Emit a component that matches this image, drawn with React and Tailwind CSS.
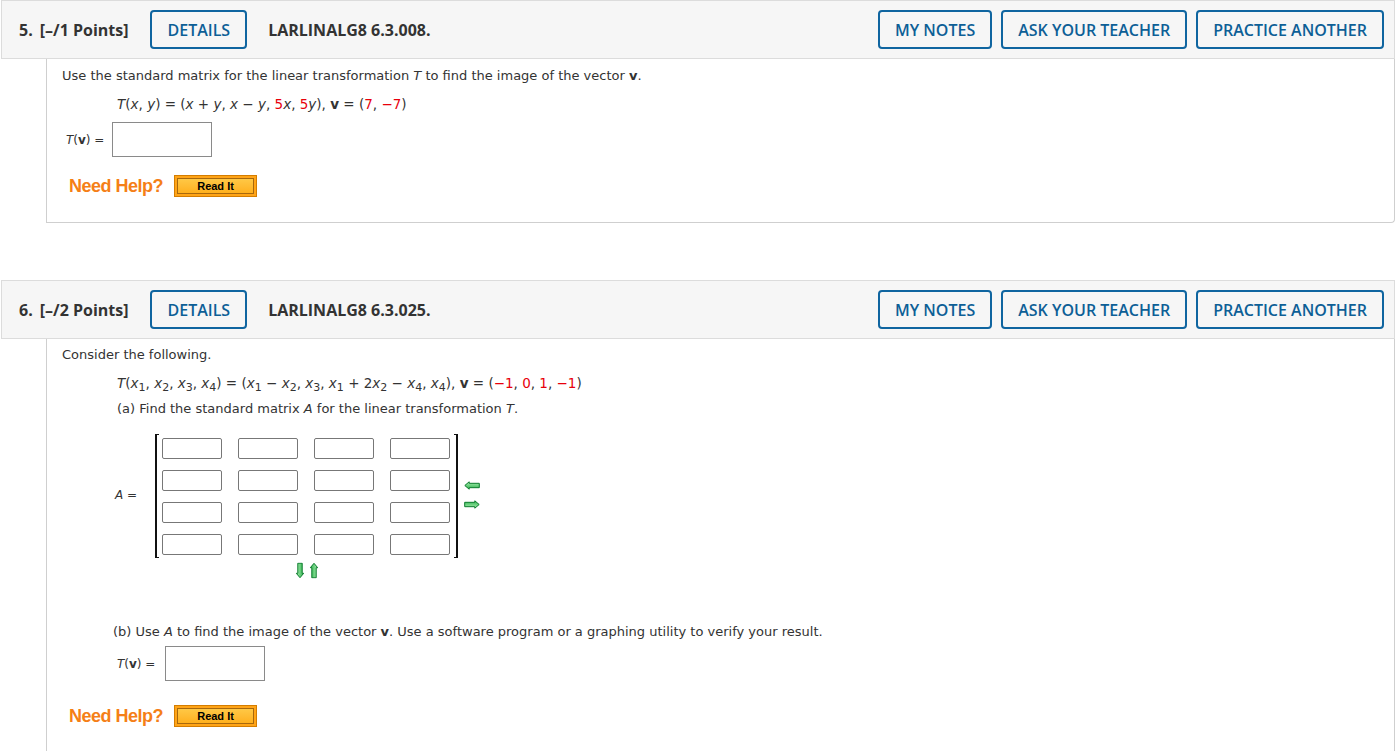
import React from 'react';

const hdrFont = { fontFamily: '"Open Sans", "Liberation Sans", sans-serif' };

const HeaderBtn = ({ children }) => (
  <button className="h-[39px] px-[15px] rounded-[4px] border-2 border-[#0f65a0] bg-white/0 text-[#0d5f96] text-[16px] font-semibold leading-none">
    {children}
  </button>
);

const QuestionHeader = ({ num, points, code }) => (
  <div
    className="h-[59px] mx-[1px] border border-[#dcdcdc] bg-[#f6f6f6] flex items-center pl-[17px] pr-[10px] text-[16px] text-[#333]"
    style={hdrFont}
  >
    <span className="font-bold">{num}.</span>
    <span className="font-bold ml-[7px]">[–/{points} Points]</span>
    <div className="ml-[22px]">
      <HeaderBtn>DETAILS</HeaderBtn>
    </div>
    <span className="font-bold ml-[21px]">{code}</span>
    <div className="ml-auto flex gap-[9px]">
      <HeaderBtn>MY NOTES</HeaderBtn>
      <HeaderBtn>ASK YOUR TEACHER</HeaderBtn>
      <HeaderBtn>PRACTICE ANOTHER</HeaderBtn>
    </div>
  </div>
);

const Red = ({ children }) => <span className="text-[#e8000b]">{children}</span>;

const Box = ({ className = '' }) => (
  <div className={'w-[100px] h-[35px] border border-[#8a8a8a] bg-white ' + className}></div>
);

const NeedHelp = () => (
  <div className="flex items-center">
    <span
      className="text-[18px] font-bold text-[#f57f17] tracking-[-0.5px]"
      style={{ fontFamily: '"Liberation Sans", Arial, sans-serif' }}
    >
      Need Help?
    </span>
    <div className="ml-[11px] w-[83px] h-[22px] bg-[#ffa417] border border-[#d47d00] p-[2px]">
      <div
        className="h-full border border-[#a8680c] bg-gradient-to-b from-[#ffc845] to-[#ffb01c] flex items-center justify-center text-[11px] font-bold text-black"
        style={{ fontFamily: '"Liberation Sans", Arial, sans-serif' }}
      >
        Read It
      </div>
    </div>
  </div>
);

const GreenArrow = ({ className = '' }) => (
  <svg width="16" height="9" viewBox="0 0 16 9" className={className}>
    <defs>
      <linearGradient id="ga" x1="0" y1="0" x2="0" y2="1">
        <stop offset="0" stopColor="#a8eeb0" />
        <stop offset="1" stopColor="#2fb24e" />
      </linearGradient>
    </defs>
    <path d="M0.8 4.5 L5.2 0.8 L5.2 2.3 L15.3 2.3 L15.3 6.7 L5.2 6.7 L5.2 8.2 Z" fill="url(#ga)" stroke="#0b7a2c" strokeWidth="1" />
  </svg>
);

const I = ({ children }) => <i>{children}</i>;
const S = ({ children }) => <sub className="text-[11px]">{children}</sub>;

export default function App() {
  const rows = [0, 1, 2, 3];
  return (
    <div className="bg-white min-h-[751px] text-[#333]" style={{ fontFamily: '"DejaVu Sans", Verdana, sans-serif' }}>
      {/* Question 5 */}
      <QuestionHeader num={5} points={1} code="LARLINALG8 6.3.008." />
      <div className="ml-[46px] mr-[1px] border-l border-r border-b border-[#cfcfcf] rounded-br-[4px] pl-[15px] pt-[9px] pb-[25px] text-[13px] leading-[16px]">
        <p>
          Use the standard matrix for the linear transformation <I>T</I> to find the image of the vector <b>v</b>.
        </p>
        <p className="ml-[55px] mt-[12px] text-[13.5px]">
          <I>T</I>(<I>x</I>, <I>y</I>) = (<I>x</I> + <I>y</I>, <I>x</I> − <I>y</I>, <Red>5</Red><I>x</I>, <Red>5</Red><I>y</I>), <b>v</b> = (<Red>7</Red>, <Red>−7</Red>)
        </p>
        <div className="flex items-center mt-[10px] ml-[4px]">
          <span className="text-[12px]"><I>T</I>(<b>v</b>) =</span>
          <Box className="ml-[8px]" />
        </div>
        <div className="mt-[18px] ml-[7px]">
          <NeedHelp />
        </div>
      </div>

      <div className="h-[57px]"></div>

      {/* Question 6 */}
      <QuestionHeader num={6} points={2} code="LARLINALG8 6.3.025." />
      <div className="ml-[46px] mr-[1px] border-l border-r border-[#cfcfcf] min-h-[420px] pl-[15px] pt-[8px] text-[13px] leading-[16px]">
        <p>Consider the following.</p>
        <p className="ml-[55px] mt-[12px] text-[13.5px]">
          <I>T</I>(<I>x</I><S>1</S>, <I>x</I><S>2</S>, <I>x</I><S>3</S>, <I>x</I><S>4</S>) = (<I>x</I><S>1</S> − <I>x</I><S>2</S>, <I>x</I><S>3</S>, <I>x</I><S>1</S> + 2<I>x</I><S>2</S> − <I>x</I><S>4</S>, <I>x</I><S>4</S>), <b>v</b> = (<Red>−1</Red>, <Red>0</Red>, <Red>1</Red>, <Red>−1</Red>)
        </p>
        <p className="ml-[55px] mt-[10px]">
          (a) Find the standard matrix <I>A</I> for the linear transformation <I>T</I>.
        </p>

        <div className="ml-[53px] mt-[17px] flex items-start">
          <span className="text-[12px] mt-[53px] w-[40px]"><I>A</I> =</span>
          <div className="flex flex-col items-center">
            <div className="flex">
              <div className="w-[4px] border-l-2 border-t border-b border-[#111]"></div>
              <div className="grid grid-cols-4 gap-x-[16px] gap-y-[11px] pl-[3px] pr-[4px] pt-[4px] pb-[3px]">
                {rows.map((r) =>
                  rows.map((c) => (
                    <div key={r + '-' + c} className="w-[60px] h-[21px] border border-[#777] rounded-[2px] bg-white"></div>
                  ))
                )}
              </div>
              <div className="w-[4px] border-r-2 border-t border-b border-[#111]"></div>
            </div>
            <div className="flex gap-[6px] mt-[8px] ml-[0px]">
              <GreenArrow className="-rotate-90 -mx-[4px]" />
              <GreenArrow className="rotate-90 -mx-[4px]" />
            </div>
          </div>
          <div className="flex flex-col gap-[10px] ml-[6px] mt-[47px]">
            <GreenArrow />
            <GreenArrow className="rotate-180" />
          </div>
        </div>

        <p className="ml-[51px] mt-[49px]">
          (b) Use <I>A</I> to find the image of the vector <b>v</b>. Use a software program or a graphing utility to verify your result.
        </p>
        <div className="flex items-center mt-[6px] ml-[55px]">
          <span className="text-[12px]"><I>T</I>(<b>v</b>) =</span>
          <Box className="ml-[10px]" />
        </div>
        <div className="mt-[24px] ml-[7px]">
          <NeedHelp />
        </div>
      </div>
    </div>
  );
}
